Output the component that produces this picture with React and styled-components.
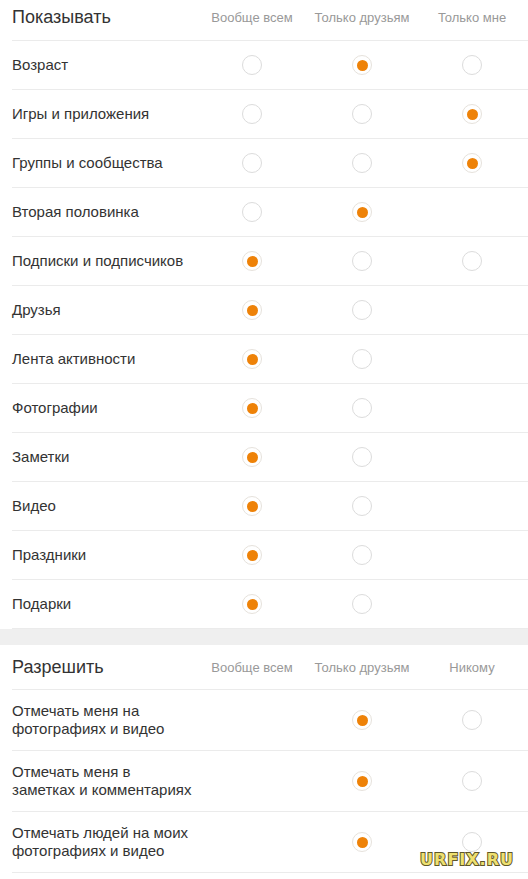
import React from 'react'
import styled, { createGlobalStyle } from 'styled-components'

const GlobalStyle = createGlobalStyle`
  html, body {
    margin: 0;
    padding: 0;
    background: #fff;
    font-family: "Liberation Sans", Arial, sans-serif;
  }
`

const showRows = [
  { label: 'Возраст', values: [0, 1, 0] },
  { label: 'Игры и приложения', values: [0, 0, 1] },
  { label: 'Группы и сообщества', values: [0, 0, 1] },
  { label: 'Вторая половинка', values: [0, 1, null] },
  { label: 'Подписки и подписчиков', values: [1, 0, 0] },
  { label: 'Друзья', values: [1, 0, null] },
  { label: 'Лента активности', values: [1, 0, null] },
  { label: 'Фотографии', values: [1, 0, null] },
  { label: 'Заметки', values: [1, 0, null] },
  { label: 'Видео', values: [1, 0, null] },
  { label: 'Праздники', values: [1, 0, null] },
  { label: 'Подарки', values: [1, 0, null] },
]

const allowRows = [
  { label: ['Отмечать меня на', 'фотографиях и видео'], values: [null, 1, 0] },
  { label: ['Отмечать меня в', 'заметках и комментариях'], values: [null, 1, 0] },
  { label: ['Отмечать людей на моих', 'фотографиях и видео'], values: [null, 1, 0] },
]

function Section({ title, columns, rows, tall, headHeight }) {
  return (
    <Block>
      <HeadRow height={headHeight}>
        <Title>{title}</Title>
        {columns.map(c => <ColHead key={c}>{c}</ColHead>)}
      </HeadRow>
      {rows.map((r, i) => (
        <Row key={i} tall={tall}>
          <Label>
            {Array.isArray(r.label)
              ? r.label.map((l, j) => <span key={j}>{l}<br /></span>)
              : r.label}
          </Label>
          {r.values.map((v, j) => (
            <Cell key={j}>{v !== null && <Radio checked={v === 1} />}</Cell>
          ))}
        </Row>
      ))}
    </Block>
  )
}

export default function App() {
  return (
    <Page>
      <GlobalStyle />
      <Section
        title="Показывать"
        columns={['Вообще всем', 'Только друзьям', 'Только мне']}
        rows={showRows}
        headHeight={41}
      />
      <Gap />
      <Section
        title="Разрешить"
        columns={['Вообще всем', 'Только друзьям', 'Никому']}
        rows={allowRows}
        headHeight={45}
        tall
      />
      <Watermark>URFIX.RU</Watermark>
    </Page>
  )
}

//styles
const Page = styled.div`
  position: relative;
  width: 528px;
  height: 879px;
  overflow: hidden;
  background: #fff;
`
const Block = styled.div`
  padding-left: 12px;
`
const Row = styled.div`
  display: grid;
  grid-template-columns: 185px 110px 110px 110px;
  align-items: center;
  height: ${p => (p.tall ? '61px' : '49px')};
  box-sizing: border-box;
  border-bottom: 1px solid #ebebeb;
`
const HeadRow = styled(Row)`
  height: ${p => p.height}px;
  padding-bottom: ${p => (p.height > 42 ? '0' : '5px')};
`
const Title = styled.div`
  font-size: 18px;
  color: #333;
`
const ColHead = styled.div`
  font-size: 13px;
  color: #999;
  text-align: center;
  white-space: nowrap;
`
const Label = styled.div`
  font-size: 15px;
  line-height: 18px;
  color: #333;
  white-space: nowrap;
`
const Cell = styled.div`
  display: flex;
  justify-content: center;
  align-items: center;
`
const Radio = styled.span`
  width: 20px;
  height: 20px;
  box-sizing: border-box;
  border-radius: 50%;
  border: 1px solid ${p => (p.checked ? '#e6e2dc' : '#dcdcdc')};
  display: flex;
  align-items: center;
  justify-content: center;
  &::after {
    content: '';
    display: ${p => (p.checked ? 'block' : 'none')};
    width: 11px;
    height: 11px;
    border-radius: 50%;
    background: #ee8208;
  }
`
const Gap = styled.div`
  height: 16px;
  background: #efefef;
`
const Watermark = styled.div`
  position: absolute;
  right: 14px;
  bottom: 10px;
  font-family: "DejaVu Sans", sans-serif;
  font-weight: bold;
  font-size: 16px;
  letter-spacing: 1px;
  color: #eee070;
  -webkit-text-stroke: 2px #5e5628;
  paint-order: stroke fill;
`
